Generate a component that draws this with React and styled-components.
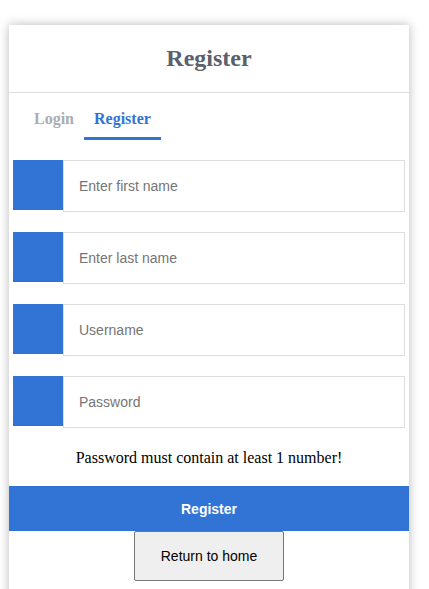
import React from "react";
import styled, { createGlobalStyle } from "styled-components";

const GlobalStyle = createGlobalStyle`
  html, body {
    margin: 0;
    padding: 0;
    background: #fff;
  }
  body {
    padding: 25px 0 0 9px;
    font-family: "Liberation Serif", "Times New Roman", serif;
  }
`;

const Card = styled.div`
  width: 400px;
  background: #fff;
  box-shadow: 0 0 10px rgba(0, 0, 0, 0.28);
  padding-bottom: 20px;
`;

const Header = styled.h1`
  margin: 0;
  height: 67px;
  display: flex;
  align-items: center;
  justify-content: center;
  font-size: 24px;
  font-weight: bold;
  color: #5a606c;
  border-bottom: 1px solid #dddddd;
`;

const Tabs = styled.div`
  display: flex;
  padding: 0 15px;
  margin-top: 13px;
`;

const Tab = styled.div`
  padding: 4px 10px 9px;
  font-size: 16px;
  font-weight: bold;
  color: ${(p) => (p.active ? "#3273d6" : "#a9adb3")};
  border-bottom: 3px solid ${(p) => (p.active ? "#3273d6" : "transparent")};
`;

const Form = styled.div`
  display: flex;
  flex-direction: column;
  gap: 20px;
  padding: 0 4px;
  margin-top: 20px;
`;

const Row = styled.div`
  display: flex;
  align-items: flex-start;
`;

const IconBox = styled.div`
  width: 50px;
  height: 50px;
  flex-shrink: 0;
  background: #3273d6;
`;

const Input = styled.input`
  flex: 1;
  height: 52px;
  box-sizing: border-box;
  border: 1px solid #dddddd;
  padding: 0 15px;
  font-family: "Liberation Sans", Arial, sans-serif;
  font-size: 14px;
  color: #333;
  outline: none;
  &::placeholder {
    color: #757575;
  }
`;

const Message = styled.p`
  margin: 21px 0 0;
  text-align: center;
  font-size: 16px;
  color: #000;
`;

const SubmitButton = styled.button`
  display: block;
  width: 100%;
  height: 45px;
  margin-top: 19px;
  border: none;
  background: #3273d6;
  color: #fff;
  font-family: "Liberation Sans", Arial, sans-serif;
  font-size: 14px;
  font-weight: bold;
`;

const HomeButton = styled.button`
  display: block;
  margin: 0 auto;
  width: 150px;
  height: 50px;
  background: #efefef;
  border: 1px solid #767676;
  border-radius: 2px;
  font-family: "Liberation Sans", Arial, sans-serif;
  font-size: 14px;
  color: #000;
`;

const fields = [
  { placeholder: "Enter first name", type: "text" },
  { placeholder: "Enter last name", type: "text" },
  { placeholder: "Username", type: "text" },
  { placeholder: "Password", type: "password" },
];

export default function App() {
  return (
    <React.Fragment>
      <GlobalStyle />
      <Card>
        <Header>Register</Header>
        <Tabs>
          <Tab>Login</Tab>
          <Tab active>Register</Tab>
        </Tabs>
        <Form>
          {fields.map((f) => (
            <Row key={f.placeholder}>
              <IconBox />
              <Input type={f.type} placeholder={f.placeholder} />
            </Row>
          ))}
        </Form>
        <Message>Password must contain at least 1 number!</Message>
        <SubmitButton>Register</SubmitButton>
        <HomeButton>Return to home</HomeButton>
      </Card>
    </React.Fragment>
  );
}
